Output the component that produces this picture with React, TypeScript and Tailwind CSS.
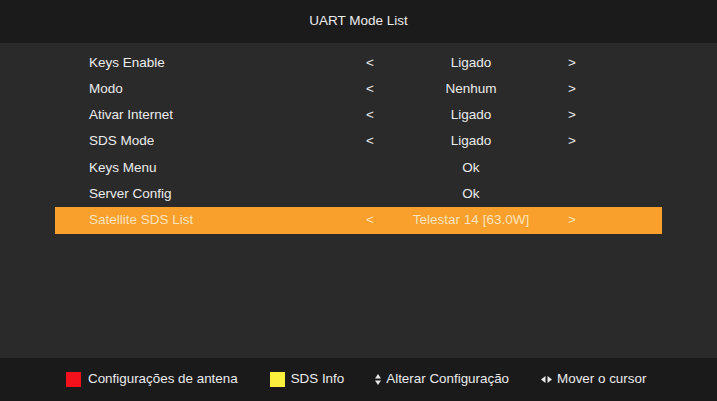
import React from 'react';

type Row = { label: string; value: string; arrows: boolean };

const ROWS: Row[] = [
  { label: 'Keys Enable', value: 'Ligado', arrows: true },
  { label: 'Modo', value: 'Nenhum', arrows: true },
  { label: 'Ativar Internet', value: 'Ligado', arrows: true },
  { label: 'SDS Mode', value: 'Ligado', arrows: true },
  { label: 'Keys Menu', value: 'Ok', arrows: false },
  { label: 'Server Config', value: 'Ok', arrows: false },
  { label: 'Satellite SDS List', value: 'Telestar 14 [63.0W]', arrows: true },
];

const SELECTED = 6;

function UpDown() {
  return (
    <svg width="6" height="11" viewBox="0 0 6 11" className="mr-[5px]">
      <path d="M3 0 L6 4.5 H0 Z" fill="#e8e8e8" />
      <path d="M3 11 L6 6.5 H0 Z" fill="#e8e8e8" />
    </svg>
  );
}

function LeftRight() {
  return (
    <svg width="11" height="7" viewBox="0 0 11 7" className="mr-[5px]">
      <path d="M0 3.5 L4.5 0 V7 Z" fill="#e8e8e8" />
      <path d="M11 3.5 L6.5 0 V7 Z" fill="#e8e8e8" />
    </svg>
  );
}

export default function App() {
  return (
    <div
      className="w-[717px] h-[401px] flex flex-col bg-[#2a2a2a] text-[#ececec] text-[13.5px] overflow-hidden"
      style={{ fontFamily: '"Liberation Sans", Arial, sans-serif' }}
    >
      <div className="h-[43px] shrink-0 bg-[#1b1b1b] flex items-center justify-center pb-[1px]">
        <span>UART Mode List</span>
      </div>

      <div className="flex-1 pt-[6.5px]">
        {ROWS.map((r, i) => {
          const sel = i === SELECTED;
          return (
            <div
              key={r.label}
              className={`ml-[55px] w-[607px] h-[26.3px] flex items-center ${
                sel ? 'bg-[#f89f2c] text-[#fbe3bd]' : ''
              }`}
            >
              <span className="pl-[34px] w-[309px]">{r.label}</span>
              <span className="w-[12px] text-center">{r.arrows ? '<' : ''}</span>
              <span className="w-[190px] text-center">{r.value}</span>
              <span className="w-[12px] text-center">{r.arrows ? '>' : ''}</span>
            </div>
          );
        })}
      </div>

      <div className="h-[43px] shrink-0 bg-[#1a1a1a] flex items-center pl-[66px] pb-[1px] text-[13.4px]">
        <span className="w-[15px] h-[15px] bg-[#f5111b] mr-[7px]" />
        <span className="mr-[32px]">Configurações de antena</span>
        <span className="w-[15px] h-[15px] bg-[#fbef3e] mr-[6px]" />
        <span className="mr-[31px]">SDS Info</span>
        <UpDown />
        <span className="mr-[32px]">Alterar Configuração</span>
        <LeftRight />
        <span>Mover o cursor</span>
      </div>
    </div>
  );
}
